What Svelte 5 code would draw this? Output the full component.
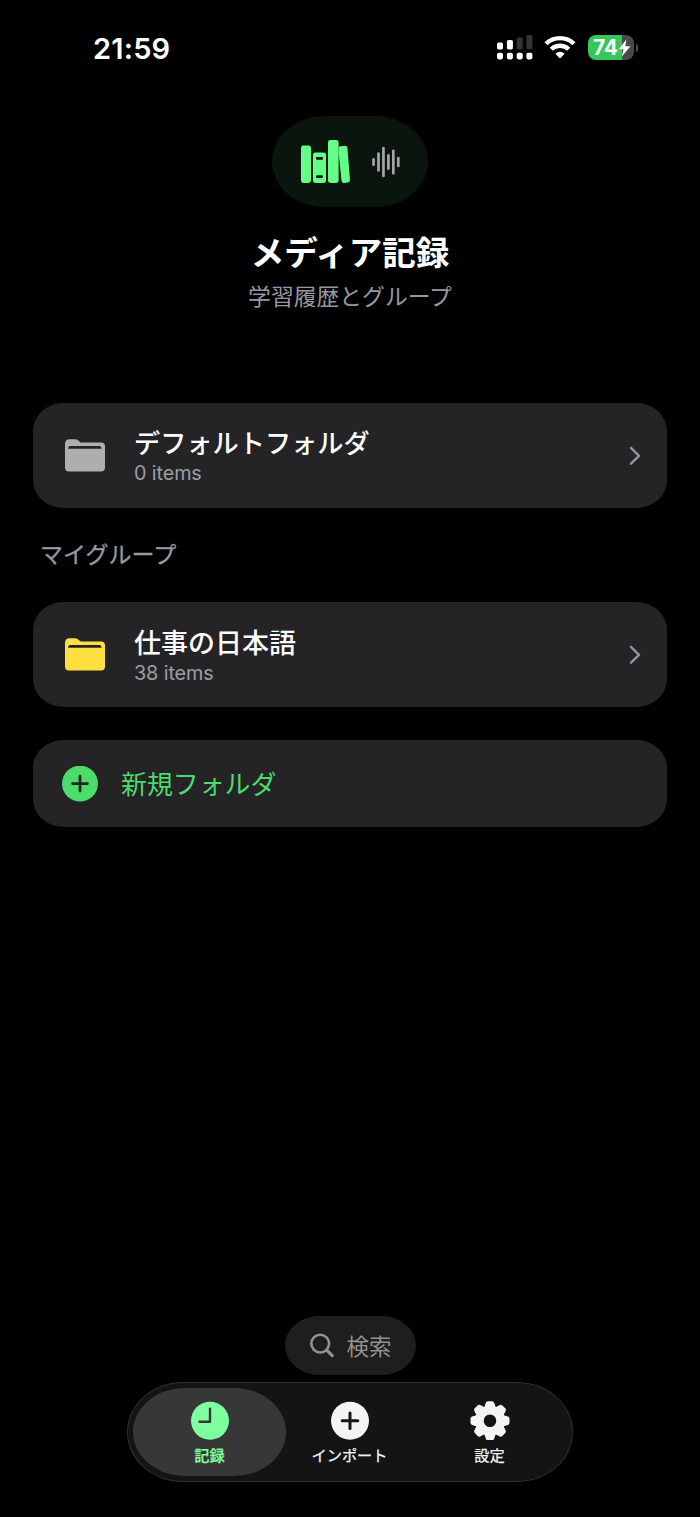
<script lang="ts">
  type Folder = { name: string; count: number; color: string };

  const defaultFolder: Folder = { name: 'デフォルトフォルダ', count: 0, color: 'gray' };
  const groups: Folder[] = [{ name: '仕事の日本語', count: 38, color: 'yellow' }];

  const tabs = [
    { id: 'history', label: '記録' },
    { id: 'import', label: 'インポート' },
    { id: 'settings', label: '設定' },
  ];

  const waveBars = [8, 19.5, 30.5, 16, 25, 10.5];
  const gearTeeth = [0, 45, 90, 135, 180, 225, 270, 315];

  let activeTab = $state('history');
</script>

{#snippet folderRow(folder: Folder)}
  <button class="card folder {folder.color}">
    <svg class="folder-icon" width="40" height="33" viewBox="0 0 40 33">
      <path
        fill="currentColor"
        d="M0 5.2V28.6Q0 32.5 3.9 32.5H36.1Q40 32.5 40 28.6V7.5Q40 3.6 36.1 3.6H17.2Q15.8 3.6 14.7 2.7L13.2 1.4Q11.8.3 10 .3H4.6Q0 .3 0 5.2Z"
      />
      <path class="slot" d="M3.2 9.7V8.9Q3.2 7 5.1 7H34.4Q36.4 7 36.4 8.9V9.7Z" />
    </svg>
    <span class="folder-text">
      <span class="name">{folder.name}</span>
      <span class="count">{folder.count} items</span>
    </span>
    <svg class="chevron" width="12" height="20" viewBox="0 0 12 20">
      <path d="M2 1.9L10 9.8L2 17.7" fill="none" stroke="currentColor" stroke-width="2.5" stroke-linecap="round" stroke-linejoin="round" />
    </svg>
  </button>
{/snippet}

<div class="screen">
  <div class="status">
    <span class="time">21:59</span>
    <div class="indicators">
      <svg width="36" height="25" viewBox="0 0 36 25" fill="#fff">
        <rect x="0" y="7.4" width="6" height="7" rx="1.6" />
        <rect x="9.9" y="5" width="6" height="9.4" rx="1.6" />
        <rect x="19.7" y="2.6" width="6" height="11.8" rx="1.6" fill="#353535" />
        <rect x="29.4" y="0" width="6" height="14.4" rx="1.6" fill="#353535" />
        <rect x="0" y="17.7" width="6" height="6.7" rx="1.8" />
        <rect x="9.9" y="17.7" width="6" height="6.7" rx="1.8" />
        <rect x="19.7" y="17.7" width="6" height="6.7" rx="1.8" />
        <rect x="29.4" y="17.7" width="6" height="6.7" rx="1.8" />
      </svg>
      <svg class="wifi" width="32" height="25" viewBox="0 0 32 25" fill="none" stroke="#fff" stroke-width="4.4">
        <path d="M2 8.8A20 20 0 0 1 30 8.8" />
        <path d="M7.3 14.3A12.4 12.4 0 0 1 24.7 14.3" />
        <path d="M16 23.6L11.3 18.8Q16 14.6 20.7 18.8Z" fill="#fff" stroke="none" />
      </svg>
      <div class="battery">
        <span>74</span>
        <svg width="13" height="18" viewBox="0 0 13 18">
          <path d="M8.3 0.4L0.8 10.2H5.5L3.9 17.6L12.4 7.2H7.4Z" fill="#fff" />
        </svg>
      </div>
      <div class="battery-cap"></div>
    </div>
  </div>

  <header>
    <div class="hero">
      <svg width="50" height="44" viewBox="0 0 50 44">
        <g fill="#63ff86">
          <rect x="0" y="5.6" width="10" height="37.4" rx="2.4" />
          <path fill-rule="evenodd" d="M14.4 12.4H22.7Q25 12.4 25 14.7V40.7Q25 43 22.7 43H14.4Q12 43 12 40.7V14.7Q12 12.4 14.4 12.4ZM16.3 17A1.3 1.3 0 0 0 16.3 19.8H20.7A1.3 1.3 0 0 0 20.7 17ZM16.3 35.2A1.3 1.3 0 0 0 16.3 38H20.7A1.3 1.3 0 0 0 20.7 35.2Z" />
          <rect x="27" y="0" width="10.6" height="43" rx="2.4" />
          <path d="M37.9 6.5L44 5.8Q46.1 5.8 46.4 7.8L49 40Q49 42.3 46.8 42.6L42.9 43Q40.8 43 40.5 40.8L37.6 12Z" />
        </g>
      </svg>
      <svg width="29" height="32" viewBox="0 0 29 32">
        {#each waveBars as h, i (i)}
          <rect x={i * 4.95 + 0.2} y={16 - h / 2} width="2.7" height={h} rx="1.35" fill="#a4a4aa" />
        {/each}
      </svg>
    </div>
    <h1>メディア記録</h1>
    <p>学習履歴とグループ</p>
  </header>

  <main>
    {@render folderRow(defaultFolder)}
    <h2>マイグループ</h2>
    {#each groups as group (group.name)}
      {@render folderRow(group)}
    {/each}
    <button class="card new-folder">
      <svg width="36" height="36" viewBox="0 0 36 36">
        <circle cx="18" cy="17.6" r="18" fill="#4bdc69" />
        <path d="M18 10.2V25M10.6 17.6H25.4" stroke="#242426" stroke-width="2.8" stroke-linecap="round" />
      </svg>
      <span>新規フォルダ</span>
    </button>
  </main>

  <footer>
    <button class="search">
      <svg width="25" height="25" viewBox="0 0 25 25" fill="none" stroke="currentColor" stroke-linecap="round">
        <circle cx="10.2" cy="10.6" r="8.9" stroke-width="2.6" />
        <path d="M17 17.4L22.3 22.7" stroke-width="3.2" />
      </svg>
      <span>検索</span>
    </button>
    <nav>
      {#each tabs as tab (tab.id)}
        <button class="tab" class:active={activeTab === tab.id} onclick={() => (activeTab = tab.id)}>
          <svg width="40" height="40" viewBox="-20 -20.7 40 40">
            {#if tab.id === 'history'}
              <circle r="19" fill="currentColor" />
              <path class="cut" d="M0 -12V1H-10.5" stroke-width="2.4" />
            {:else if tab.id === 'import'}
              <circle r="19" fill="currentColor" />
              <path class="cut" d="M0 -7.8V7.8M-7.8 0H7.8" stroke-width="3" />
            {:else}
              <circle r="10.6" fill="none" stroke="currentColor" stroke-width="8.6" />
              {#each gearTeeth as angle (angle)}
                <path
                  d="M-5.8 -13L-4.2 -18Q-3.6 -19.5 -2 -19.5H2Q3.6 -19.5 4.2 -18L5.8 -13Z"
                  fill="currentColor"
                  transform="rotate({angle})"
                />
              {/each}
            {/if}
          </svg>
          <span>{tab.label}</span>
        </button>
      {/each}
    </nav>
  </footer>
</div>

<style>
  :global(body) {
    background: #000;
  }

  .screen {
    display: flex;
    flex-direction: column;
    box-sizing: border-box;
    width: 700px;
    height: 1517px;
    padding-bottom: 35px;
    background: #000;
    color: #fff;
    font-family: Inter, 'Noto Sans CJK JP', sans-serif;
    overflow: hidden;
  }

  button {
    margin: 0;
    padding: 0;
    border: 0;
    font: inherit;
    color: inherit;
    text-align: left;
  }

  svg {
    display: block;
    flex: none;
  }

  .status {
    display: flex;
    align-items: center;
    justify-content: space-between;
    box-sizing: border-box;
    height: 116px;
    padding: 0 62px 21px 93px;
  }

  .time {
    padding-top: 1px;
    font-size: 29px;
    font-weight: 600;
    letter-spacing: 0.2px;
  }

  .indicators {
    display: flex;
    align-items: center;
  }

  .wifi {
    margin: 0 12px 0 11px;
  }

  .battery {
    display: flex;
    align-items: center;
    box-sizing: border-box;
    width: 46px;
    height: 25px;
    padding-left: 5px;
    border-radius: 8px;
    background: linear-gradient(90deg, #34c759 74%, #4a4a4c 74%);
    font-size: 21px;
    font-weight: 700;
    letter-spacing: -0.2px;
  }

  .battery-cap {
    width: 2px;
    height: 8px;
    margin-left: 2px;
    border-radius: 0 3px 3px 0;
    background: #4a4a4c;
  }

  header {
    display: flex;
    flex-direction: column;
    align-items: center;
    height: 287px;
  }

  .hero {
    display: flex;
    align-items: center;
    gap: 21px;
    box-sizing: border-box;
    width: 156px;
    height: 91px;
    padding-left: 29px;
    border-radius: 53px / 45.5px;
    background: #0a150d;
  }

  h1 {
    margin: 24px 0 0;
    font-size: 33.5px;
    line-height: 44px;
    font-weight: 700;
  }

  p {
    margin: 6px 0 0;
    font-size: 22.8px;
    line-height: 32px;
    color: #98989f;
  }

  main {
    display: flex;
    flex: 1;
    flex-direction: column;
    padding: 0 33px;
  }

  .card {
    display: flex;
    align-items: center;
    box-sizing: border-box;
    border-radius: 30px / 28px;
    background: #242426;
  }

  .folder {
    height: 105px;
    padding: 0 26px 0 32px;
  }

  .gray .folder-icon {
    color: #aeaeb0;
  }

  .yellow .folder-icon {
    color: #ffdf40;
  }

  .slot {
    fill: #242426;
  }

  .folder-text {
    display: flex;
    flex: 1;
    flex-direction: column;
    margin-left: 29px;
  }

  .name {
    padding-top: 3px;
    font-size: 27px;
    line-height: 36px;
    font-weight: 500;
  }

  .gray .name {
    padding-top: 1px;
    font-size: 26.2px;
  }

  .count {
    margin-top: -2px;
    font-size: 19.8px;
    line-height: 26px;
    letter-spacing: -0.1px;
    color: #9d9da4;
  }

  .chevron {
    color: #929298;
  }

  h2 {
    margin: 30px 0 30px 7px;
    font-size: 23px;
    line-height: 34px;
    font-weight: 400;
    color: #98989f;
    -webkit-text-stroke: 0.3px #98989f;
  }

  .new-folder {
    height: 87px;
    margin-top: 33px;
    padding-left: 29px;
    gap: 23px;
    color: #4bdc69;
    font-size: 25.9px;
  }

  .new-folder span {
    padding-bottom: 2px;
  }

  footer {
    display: flex;
    flex-direction: column;
    align-items: center;
    gap: 7px;
  }

  .search {
    display: flex;
    align-items: center;
    gap: 12px;
    box-sizing: border-box;
    width: 131px;
    height: 59px;
    padding: 0 0 1px 25px;
    border-radius: 34px / 29.5px;
    background: #1e1e1e;
    color: #929292;
    font-size: 22.5px;
  }

  nav {
    display: flex;
    box-sizing: border-box;
    width: 446px;
    height: 100px;
    padding: 5px;
    border: 1px solid #303030;
    border-radius: 56px / 50px;
    background: #141414;
  }

  .tab {
    display: flex;
    flex: 0 0 140px;
    flex-direction: column;
    align-items: center;
    box-sizing: border-box;
    padding-top: 12px;
    border-radius: 52px / 44px;
    background: none;
    color: #f4f4f4;
    font-size: 15.2px;
    line-height: 22px;
    font-weight: 400;
    -webkit-text-stroke: 0.25px currentColor;
  }

  .tab span {
    margin-top: 5px;
    white-space: nowrap;
  }

  /* the highlight pill runs slightly under its neighbour */
  .tab.active {
    flex-basis: 153px;
    margin-right: -6.5px;
    background: #373737;
    color: #80ff9e;
    font-weight: 500;
  }

  .cut {
    fill: none;
    stroke: #141414;
    stroke-linecap: round;
    stroke-linejoin: round;
  }

  .active .cut {
    stroke: #373737;
  }
</style>
